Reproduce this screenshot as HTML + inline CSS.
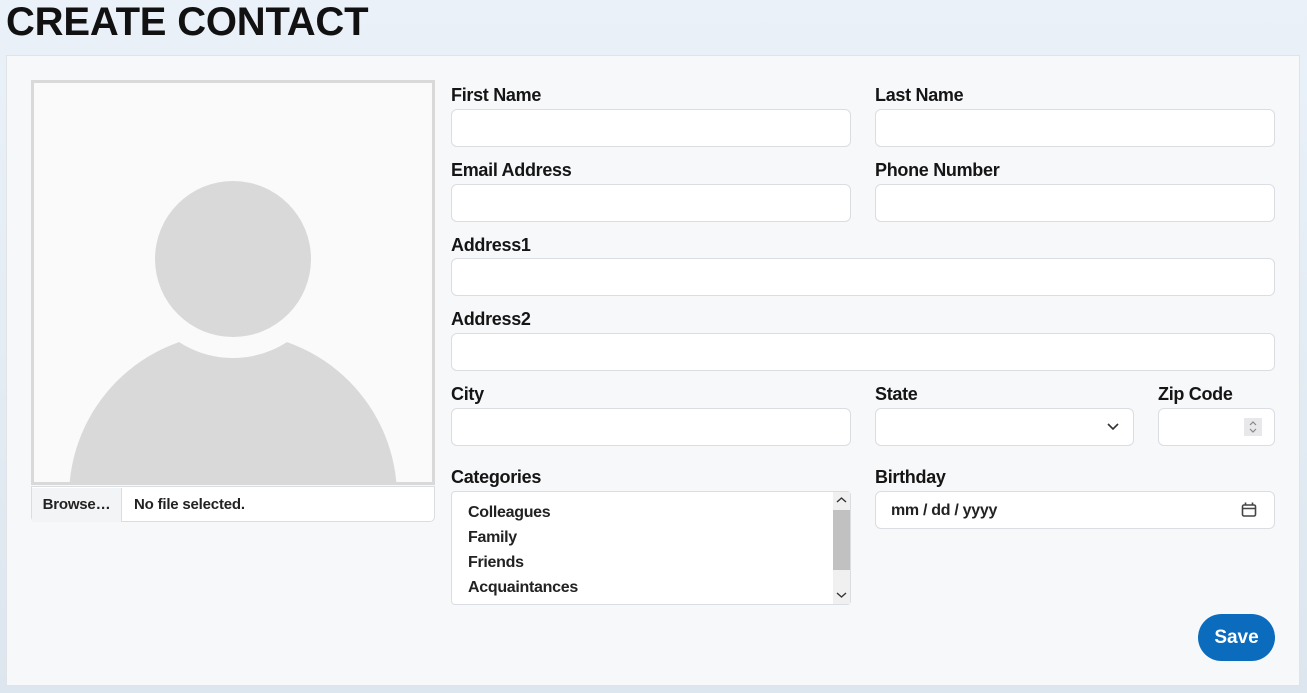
<!DOCTYPE html>
<html><head><style>
body{margin:0;width:1307px;height:693px;overflow:hidden;background:linear-gradient(#eaf1f9,#dde6ee);font-family:"Liberation Sans",sans-serif;position:relative}
h1{position:absolute;left:6px;top:0;margin:0;font-size:40px;font-weight:bold;color:#111;line-height:44px;letter-spacing:-0.2px}
.card{position:absolute;left:6px;top:55px;width:1294px;height:631px;background:#f7f8fa;border:1px solid #e0e4e8;box-sizing:border-box}
.a{position:absolute}
.lbl{position:absolute;font-size:18px;font-weight:bold;color:#151515;letter-spacing:-0.3px}
.in{position:absolute;height:38px;background:#fff;border:1px solid #dadde1;border-radius:6px;box-sizing:border-box}
</style></head><body>
<h1>CREATE CONTACT</h1>
<div class="card"></div>
<div class="a" style="left:31px;top:80px;width:404px;height:405px;border:3px solid #d9d9d9;box-sizing:border-box;background:#fafafa;overflow:hidden">
<svg width="398" height="399" viewBox="34 83 398 399">
<circle cx="233" cy="497" r="164" fill="#d9d9d9"/>
<circle cx="233" cy="259" r="99" fill="#fafafa"/>
<circle cx="233" cy="259" r="78" fill="#d9d9d9"/>
</svg></div>
<div class="a" style="left:31px;top:486px;width:404px;height:36px;border:1px solid #dadde1;border-radius:0 0 5px 5px;background:#fff;box-sizing:border-box;font-size:15px;font-weight:bold;color:#222;letter-spacing:-0.2px">
<div class="a" style="left:0;top:1px;width:89px;height:34px;background:#f3f4f5;border-right:1px solid #dadde1;line-height:34px;text-align:center">Browse…</div>
<div class="a" style="left:102px;top:1px;line-height:34px">No file selected.</div></div>

<div class="lbl" style="left:451px;top:85px">First Name</div><div class="in" style="left:451px;top:109px;width:400px"></div>
<div class="lbl" style="left:875px;top:85px">Last Name</div><div class="in" style="left:875px;top:109px;width:400px"></div>
<div class="lbl" style="left:451px;top:160px">Email Address</div><div class="in" style="left:451px;top:184px;width:400px"></div>
<div class="lbl" style="left:875px;top:160px">Phone Number</div><div class="in" style="left:875px;top:184px;width:400px"></div>
<div class="lbl" style="left:451px;top:235px">Address1</div><div class="in" style="left:451px;top:258px;width:824px"></div>
<div class="lbl" style="left:451px;top:309px">Address2</div><div class="in" style="left:451px;top:333px;width:824px"></div>
<div class="lbl" style="left:451px;top:384px">City</div><div class="in" style="left:451px;top:408px;width:400px"></div>
<div class="lbl" style="left:875px;top:384px">State</div><div class="in" style="left:875px;top:408px;width:259px"><svg class="a" style="left:231px;top:13px" width="12" height="10"><path d="M1 2 L6 7 L11 2" stroke="#333" stroke-width="1.6" fill="none"/></svg></div>
<div class="lbl" style="left:1158px;top:384px">Zip Code</div><div class="in" style="left:1158px;top:408px;width:117px"><div class="a" style="left:85px;top:9px;width:18px;height:18px;background:#e8e8ea"><svg width="18" height="18"><path d="M6 7 L9 4 L12 7 M6 11 L9 14 L12 11" stroke="#888" stroke-width="1.2" fill="none"/></svg></div></div>
<div class="lbl" style="left:451px;top:467px">Categories</div>
<div class="in" style="left:451px;top:491px;width:400px;height:114px;border-radius:4px;font-size:16px;font-weight:bold;color:#222;letter-spacing:-0.3px">
<div class="a" style="left:16px;top:8px;line-height:25px">Colleagues<br>Family<br>Friends<br>Acquaintances</div>
<div class="a" style="right:0;top:0;width:17px;height:112px;background:#f0f0f0"><div class="a" style="left:0;top:18px;width:17px;height:60px;background:#c1c1c1"></div>
<svg class="a" style="left:0;top:0" width="17" height="112"><path d="M4 10 L8.5 6 L13 10 M4 101 L8.5 105 L13 101" stroke="#333" stroke-width="1.4" fill="none"/></svg></div></div>
<div class="lbl" style="left:875px;top:467px">Birthday</div>
<div class="in" style="left:875px;top:491px;width:400px;font-size:16px;font-weight:bold;color:#222;letter-spacing:-0.3px"><div class="a" style="left:15px;top:10px">mm / dd / yyyy</div>
<svg class="a" style="left:365px;top:9px" width="16" height="18"><rect x="1.5" y="4" width="13" height="11" rx="1.5" stroke="#444" stroke-width="1.6" fill="none"/><path d="M1.5 7.5 H14.5 M4.5 1.5 V4 M11.5 1.5 V4" stroke="#444" stroke-width="1.6"/></svg></div>
<div class="a" style="left:1198px;top:614px;width:77px;height:47px;border-radius:24px;background:#0b6cbd;color:#fff;font-size:19px;font-weight:bold;text-align:center;line-height:47px">Save</div>
</body></html>
